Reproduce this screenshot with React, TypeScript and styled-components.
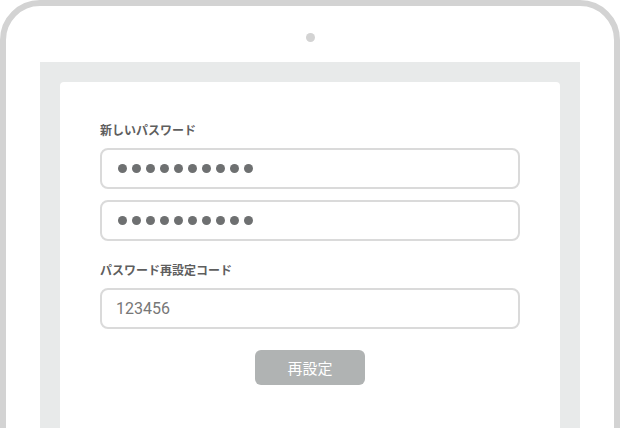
import React from "react";
import styled, { createGlobalStyle } from "styled-components";

const GlobalStyle = createGlobalStyle`
  html, body {
    margin: 0;
    padding: 0;
    background: #ffffff;
    overflow: hidden;
  }
  body {
    font-family: "Noto Sans CJK JP", "Noto Sans", sans-serif;
  }
`;

const Page = styled.div`
  width: 620px;
  height: 428px;
  overflow: hidden;
`;

const Frame = styled.div`
  box-sizing: border-box;
  width: 620px;
  height: 480px;
  border: 6px solid #d3d3d3;
  border-radius: 40px;
  padding: 27px 34px 0;
  display: flex;
  flex-direction: column;
  align-items: center;
`;

const Camera = styled.div`
  width: 9px;
  height: 9px;
  border-radius: 50%;
  background: #d3d3d3;
  margin-bottom: 20px;
`;

const Screen = styled.div`
  align-self: stretch;
  flex: 1;
  background: #e8eaea;
  padding: 20px 20px 0;
  display: flex;
`;

const Card = styled.div`
  flex: 1;
  background: #ffffff;
  border-radius: 4px;
  padding: 39px 40px 0;
  display: flex;
  flex-direction: column;
`;

const Label = styled.div<{ $first?: boolean }>`
  font-size: 12px;
  line-height: 18px;
  font-weight: 700;
  color: #5e5e5e;
  margin-top: ${(p) => (p.$first ? "0" : "20px")};
  margin-bottom: 9px;
`;

const Field = styled.div<{ $gap?: boolean }>`
  box-sizing: border-box;
  height: 41px;
  border: 2px solid #dadada;
  border-radius: 8px;
  padding: 0 16px;
  display: flex;
  align-items: center;
  margin-top: ${(p) => (p.$gap ? "11px" : "0")};
`;

const Dots = styled.div`
  display: flex;
  gap: 5px;
`;

const Dot = styled.span`
  width: 9px;
  height: 9px;
  border-radius: 50%;
  background: #6e7071;
`;

const Code = styled.span`
  font-family: Roboto, "Noto Sans", sans-serif;
  font-size: 16px;
  color: #777777;
  margin-left: -2px;
`;

const Actions = styled.div`
  display: flex;
  justify-content: center;
  margin-top: 21px;
`;

const Button = styled.button`
  width: 110px;
  height: 35px;
  border: none;
  border-radius: 6px;
  background: #b0b3b3;
  color: #ffffff;
  font-family: "Noto Sans CJK JP", sans-serif;
  font-size: 15px;
  padding: 0;
`;

const PasswordDots = () => (
  <Dots>
    {Array.from({ length: 10 }).map((_, i) => (
      <Dot key={i} />
    ))}
  </Dots>
);

export default function App() {
  return (
    <Page>
      <GlobalStyle />
      <Frame>
        <Camera />
        <Screen>
          <Card>
            <Label $first>新しいパスワード</Label>
            <Field>
              <PasswordDots />
            </Field>
            <Field $gap>
              <PasswordDots />
            </Field>
            <Label>パスワード再設定コード</Label>
            <Field>
              <Code>123456</Code>
            </Field>
            <Actions>
              <Button>再設定</Button>
            </Actions>
          </Card>
        </Screen>
      </Frame>
    </Page>
  );
}
